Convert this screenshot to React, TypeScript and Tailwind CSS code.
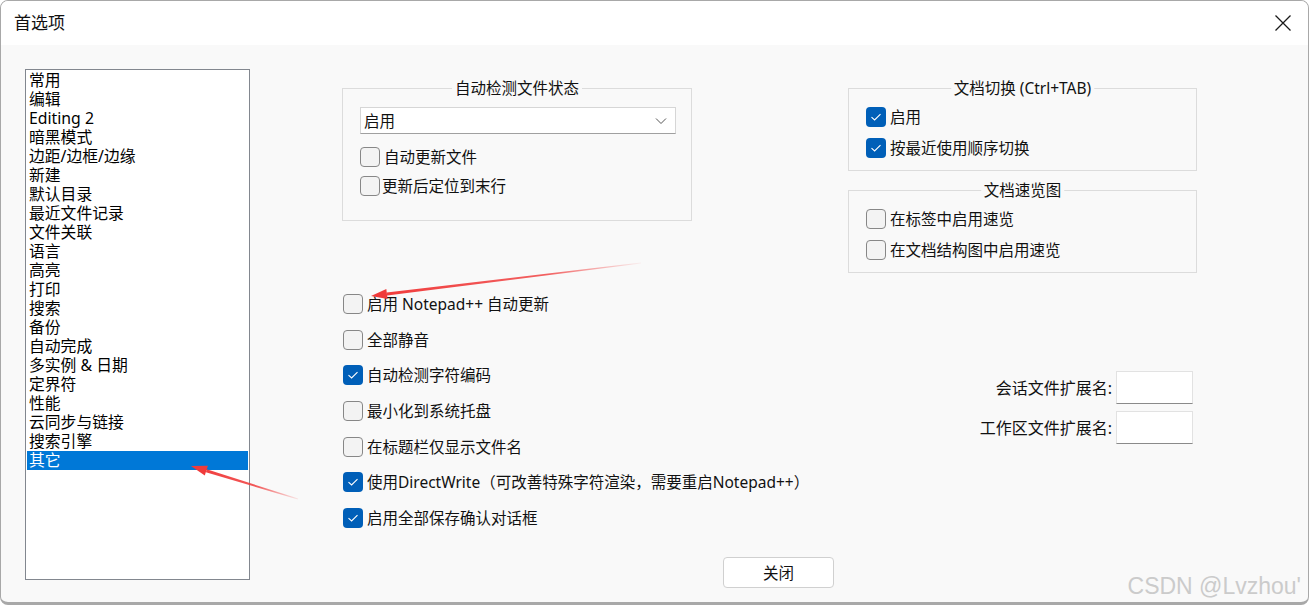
import React from "react"

const categories = [
  "常用",
  "编辑",
  "Editing 2",
  "暗黑模式",
  "边距/边框/边缘",
  "新建",
  "默认目录",
  "最近文件记录",
  "文件关联",
  "语言",
  "高亮",
  "打印",
  "搜索",
  "备份",
  "自动完成",
  "多实例 & 日期",
  "定界符",
  "性能",
  "云同步与链接",
  "搜索引擎",
  "其它",
]

const options = [
  { label: "启用 Notepad++ 自动更新", checked: false },
  { label: "全部静音", checked: false },
  { label: "自动检测字符编码", checked: true },
  { label: "最小化到系统托盘", checked: false },
  { label: "在标题栏仅显示文件名", checked: false },
  { label: "使用DirectWrite（可改善特殊字符渲染，需要重启Notepad++）", checked: true },
  { label: "启用全部保存确认对话框", checked: true },
]

function CheckBox({ checked }: { checked: boolean }) {
  if (checked) {
    return (
      <span className="flex h-[20px] w-[20px] shrink-0 items-center justify-center rounded-[4px] bg-[#005fb8]">
        <svg width="20" height="20" viewBox="0 0 20 20" fill="none">
          <path d="M5.5 10.2 L8.6 13 L14.5 7.2" stroke="#ffffff" strokeWidth="1.1" />
        </svg>
      </span>
    )
  }
  return <span className="h-[20px] w-[20px] shrink-0 rounded-[4px] border border-[#878787] bg-[#f3f3f3]" />
}

function Option({ label, checked, gap = "gap-[4px]" }: { label: string; checked: boolean; gap?: string }) {
  return (
    <div className={`flex h-[20px] items-center whitespace-nowrap ${gap}`}>
      <CheckBox checked={checked} />
      <span className="leading-[20px]">{label}</span>
    </div>
  )
}

function Group({ title, height, width, children }: { title: string; height: string; width: string; children: React.ReactNode }) {
  return (
    <div className={`relative border border-[#dcdcdc] ${height} ${width}`}>
      <span className="absolute left-1/2 top-[-11px] -translate-x-1/2 whitespace-nowrap bg-[#f9f9f9] px-[3px] leading-[20px]">
        {title}
      </span>
      {children}
    </div>
  )
}

function Arrows() {
  return (
    <svg className="pointer-events-none absolute left-0 top-0" width="1309" height="605" viewBox="0 0 1309 605">
      <defs>
        <linearGradient id="fade1" gradientUnits="userSpaceOnUse" x1="640" y1="262" x2="370" y2="295">
          <stop offset="0" stopColor="#f03a3a" stopOpacity="0.05" />
          <stop offset="0.35" stopColor="#f03a3a" stopOpacity="0.8" />
          <stop offset="1" stopColor="#f03a3a" />
        </linearGradient>
        <linearGradient id="fade2" gradientUnits="userSpaceOnUse" x1="297" y1="498" x2="190" y2="465">
          <stop offset="0" stopColor="#f03a3a" stopOpacity="0.1" />
          <stop offset="0.4" stopColor="#f03a3a" stopOpacity="0.85" />
          <stop offset="1" stopColor="#f03a3a" />
        </linearGradient>
      </defs>
      <polygon points="639.9,261.5 640.1,262.5 386.1,294.6 385.7,291.6" fill="url(#fade1)" />
      <polygon points="370,295 385.3,288 386.6,298.1" fill="#f03a3a" />
      <polygon points="297.2,497.5 296.8,498.5 204.9,471.2 205.7,468.3" fill="url(#fade2)" />
      <polygon points="190,465 206.9,464.8 203.8,474.6" fill="#f03a3a" />
    </svg>
  )
}

export default function App() {
  return (
    <div className="relative flex h-[605px] w-[1309px] flex-col overflow-hidden rounded-[8px] border border-b-[3px] border-[#a8a8a8] bg-[#f9f9f9] font-['Segoe_UI','Noto_Sans','Noto_Sans_CJK_SC',sans-serif] text-[15.5px] text-[#111111]">
      {/* Title bar */}
      <div className="flex h-[44px] shrink-0 items-center justify-between bg-white pl-[13px] pr-[16px]">
        <span className="text-[17px] leading-[22px]">首选项</span>
        <svg width="18" height="18" viewBox="0 0 18 18" fill="none">
          <path d="M1.5 1.5 L16.5 16.5 M16.5 1.5 L1.5 16.5" stroke="#1a1a1a" strokeWidth="1.3" />
        </svg>
      </div>

      {/* Body */}
      <div className="flex flex-1 items-start">
        {/* Category list */}
        <div className="ml-[24px] mt-[24px] h-[511px] w-[225px] shrink-0 border border-[#82878f] bg-white p-[1px]">
          {categories.map((c) => (
            <div
              key={c}
              className={`h-[19px] whitespace-nowrap pl-[2px] text-[15.8px] leading-[19px] ${c === "其它" ? "bg-[#0078d7] text-white" : "text-black"}`}
            >
              {c}
            </div>
          ))}
        </div>

        <div className="ml-[92px] flex flex-col">
          <div className="flex">
            {/* Middle column */}
            <div className="flex w-[506px] flex-col">
              <div className="mt-[43px]">
                <Group title="自动检测文件状态" height="h-[133px]" width="w-[350px]">
                  <div className="flex flex-col pl-[17px] pt-[18px]">
                    <div className="flex h-[27px] w-[316px] items-center justify-between border border-[#d6d6d6] border-b-[#a0a0a0] bg-white pl-[3px] pr-[8px]">
                      <span className="leading-[20px]">启用</span>
                      <svg width="12" height="8" viewBox="0 0 12 8" fill="none">
                        <path d="M1 1.5 L6 6.5 L11 1.5" stroke="#555555" strokeWidth="1" />
                      </svg>
                    </div>
                    <div className="mt-[13px]">
                      <Option label="自动更新文件" checked={false} />
                    </div>
                    <div className="mt-[9px]">
                      <Option label="更新后定位到末行" checked={false} gap="gap-[2px]" />
                    </div>
                  </div>
                </Group>
              </div>

              <div className="ml-[1px] mt-[73px] flex flex-col gap-[15.7px]">
                {options.map((o) => (
                  <Option key={o.label} label={o.label} checked={o.checked} />
                ))}
              </div>
            </div>

            {/* Right column */}
            <div className="flex w-[349px] flex-col">
              <div className="mt-[43px]">
                <Group title="文档切换 (Ctrl+TAB)" height="h-[83px]" width="w-[349px]">
                  <div className="flex flex-col gap-[11px] pl-[17px] pt-[18px]">
                    <Option label="启用" checked gap="gap-[4px]" />
                    <Option label="按最近使用顺序切换" checked gap="gap-[4px]" />
                  </div>
                </Group>
              </div>
              <div className="mt-[19px]">
                <Group title="文档速览图" height="h-[83px]" width="w-[349px]">
                  <div className="flex flex-col gap-[11px] pl-[17px] pt-[18px]">
                    <Option label="在标签中启用速览" checked={false} />
                    <Option label="在文档结构图中启用速览" checked={false} />
                  </div>
                </Group>
              </div>

              <div className="mt-[98px] flex flex-col items-end gap-[7px] pr-[4px]">
                <div className="flex items-center gap-[4px]">
                  <span className="text-[16px] leading-[20px]">会话文件扩展名:</span>
                  <div className="h-[33px] w-[77px] border border-[#e2e2e2] border-b-[#8a8a8a] bg-white" />
                </div>
                <div className="flex items-center gap-[4px]">
                  <span className="text-[16px] leading-[20px]">工作区文件扩展名:</span>
                  <div className="h-[33px] w-[77px] border border-[#e2e2e2] border-b-[#8a8a8a] bg-white" />
                </div>
              </div>
            </div>
          </div>

          <div className="mt-[29px] pl-[381px]">
            <button className="flex h-[31px] w-[111px] items-center justify-center rounded-[4px] border border-[#d0d0d0] bg-white leading-[20px]">
              关闭
            </button>
          </div>
        </div>
      </div>

      <span className="absolute bottom-[3px] right-[7px] font-['Liberation_Sans',sans-serif] text-[23px] leading-[26px] text-[#cbcbcb]">
        CSDN @Lvzhou'
      </span>

      <Arrows />
    </div>
  )
}
